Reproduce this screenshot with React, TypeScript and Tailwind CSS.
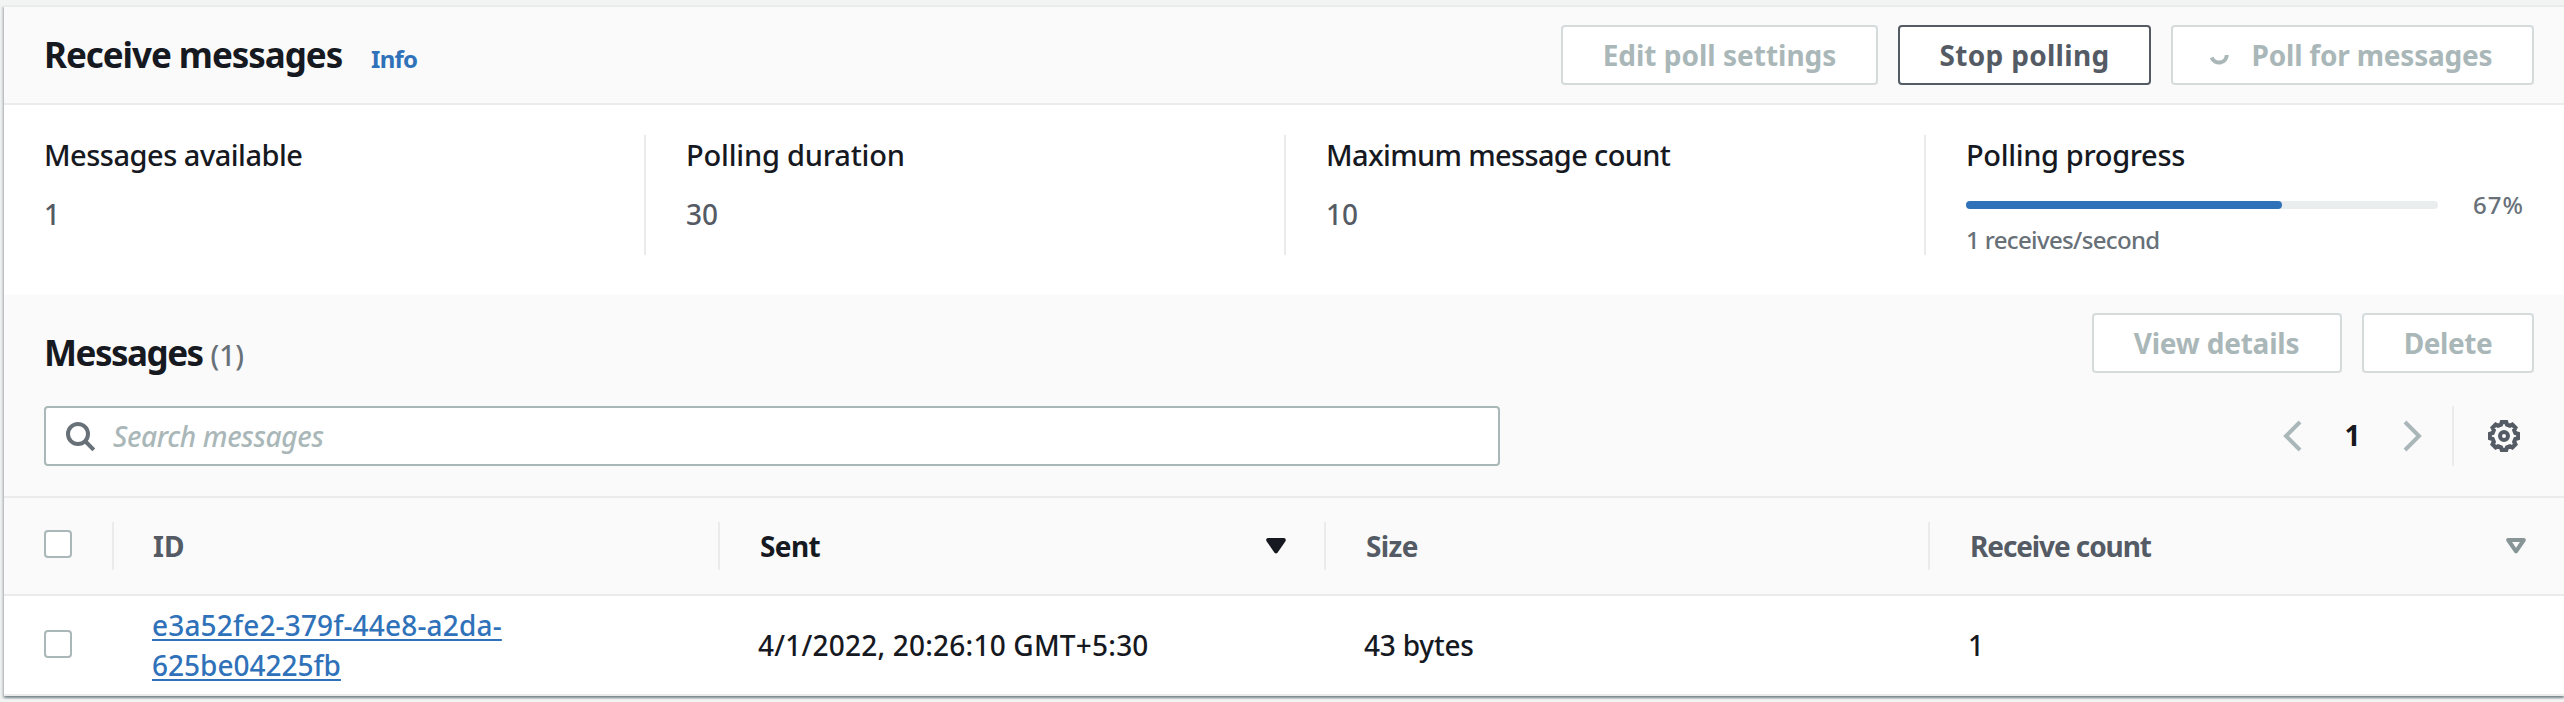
import React from "react";
import { clsx } from "clsx";

function Button({ className, children, active = false }: { className?: string; children: React.ReactNode; active?: boolean }) {
  return (
    <button
      className={clsx(
        "flex h-[60px] shrink-0 items-center justify-center rounded-[4px] border-2 bg-white text-[28px] leading-10 font-bold whitespace-nowrap",
        active ? "border-[#545b64] text-[#545b64]" : "border-[#d5dbdb] text-[#aab7b8]",
        className,
      )}
    >
      {children}
    </button>
  );
}

function Spinner() {
  return (
    <svg className="mr-[18px] h-[28px] w-[28px] shrink-0" viewBox="0 0 28 28" fill="none">
      <path d="M5.7 16.5 A7.8 7.8 0 0 0 20.8 14" stroke="#aab7b8" strokeWidth="4" />
    </svg>
  );
}

function SearchIcon() {
  return (
    <svg className="h-[32px] w-[32px] shrink-0" viewBox="0 0 32 32" fill="none" stroke="#687078" strokeWidth="4">
      <circle cx="14" cy="14" r="10" />
      <path d="M21 21 L29.8 29.8" />
    </svg>
  );
}

function gearPath() {
  const points: string[] = [];
  const at = (radius: number, degrees: number) => {
    const a = (degrees * Math.PI) / 180;
    points.push(`${(16 + radius * Math.sin(a)).toFixed(2)} ${(16 - radius * Math.cos(a)).toFixed(2)}`);
  };
  for (let i = 0; i < 8; i++) {
    at(14.1, i * 45 - 9);
    at(14.1, i * 45 + 9);
    at(11.8, i * 45 + 15);
    at(11.8, i * 45 + 30);
  }
  return `M${points.join("L")}Z`;
}

function GearIcon() {
  return (
    <svg className="h-[32px] w-[32px] shrink-0" viewBox="0 0 32 32" fill="none" stroke="#545b64" strokeWidth="4.2">
      <path d={gearPath()} />
      <circle cx="16" cy="16" r="4" strokeWidth="4" />
    </svg>
  );
}

function Chevron({ points }: { points: string }) {
  return (
    <svg className="h-[32px] w-[20px] shrink-0" viewBox="0 0 20 32" fill="none" stroke="#aab7b8" strokeWidth="4">
      <polyline points={points} />
    </svg>
  );
}

function SortIcon({ filled = false }: { filled?: boolean }) {
  const color = filled ? "#16191f" : "#879596";
  return (
    <svg className="h-[16px] w-[20px] shrink-0" viewBox="0 0 20 16" fill={filled ? color : "none"} stroke={color} strokeWidth="4" strokeLinejoin="round">
      <path d="M2.2 2 H17.8 L10 13.4 Z" />
    </svg>
  );
}

function Checkbox() {
  return <span className="block h-[28px] w-[28px] shrink-0 rounded-[4px] border-2 border-[#aab7b8] bg-white" />;
}

function Stat({ label, labelClass, first = false, children }: { label: string; labelClass: string; first?: boolean; children: React.ReactNode }) {
  return (
    <div className={clsx("h-[120px] border-l-2", first ? "border-transparent pl-[38px]" : "border-[#eaebeb] pl-10")}>
      <div className={clsx("text-[29px] leading-10 whitespace-nowrap", labelClass)}>{label}</div>
      {children}
    </div>
  );
}

const columns = "grid grid-cols-[108px_606px_606px_604px_636px]";

export default function App() {
  return (
    <div className="h-[702px] w-[2564px] overflow-hidden bg-[#f2f3f3] pt-[5px] pl-1 font-['Noto_Sans',sans-serif] text-[28px] font-medium text-[#16191f]">
      <main className="w-[2560px] border-y-2 border-[#eaebeb] bg-white shadow-[0_2px_2px_0_rgba(0,28,36,0.3),2px_2px_2px_0_rgba(0,28,36,0.15),-2px_2px_2px_0_rgba(0,28,36,0.15)]">
        <header className="flex h-[98px] items-center justify-between border-b-2 border-[#eaebeb] bg-[#fafafa] pr-[30px] pl-10">
          <div className="flex items-baseline">
            <h1 className="w-[327px] text-[35px] leading-[44px] font-bold tracking-[-1.05px] whitespace-nowrap">Receive messages</h1>
            <a className="text-[24px] font-bold tracking-[-0.7px] text-[#3072b9]">Info</a>
          </div>
          <div className="flex gap-5">
            <Button className="w-[317px]">Edit poll settings</Button>
            <Button active className="w-[253px] tracking-[0.3px]">Stop polling</Button>
            <Button className="w-[363px] pr-[7px] tracking-[-0.2px]">
              <Spinner />
              Poll for messages
            </Button>
          </div>
        </header>

        <section className="grid h-[190px] grid-cols-4 pt-[30px]">
          <Stat first label="Messages available" labelClass="tracking-[-0.5px]">
            <div className="mt-[19px] leading-10 text-[#545b64]">1</div>
          </Stat>
          <Stat label="Polling duration" labelClass="tracking-[-0.2px]">
            <div className="mt-[19px] leading-10 text-[#545b64]">30</div>
          </Stat>
          <Stat label="Maximum message count" labelClass="tracking-[-0.65px]">
            <div className="mt-[19px] leading-10 text-[#545b64]">10</div>
          </Stat>
          <Stat label="Polling progress" labelClass="tracking-[-0.35px]">
            <div className="mt-3 text-[24px] leading-9 text-[#687078]">
              <div className="flex h-[35px] items-center">
                <div className="h-2 w-[472px] rounded-full bg-[#eaeded]">
                  <div className="h-2 w-[67%] rounded-full bg-[#3072b9]" />
                </div>
                <span className="ml-[35px] tracking-[1px]">67%</span>
              </div>
              <div className="tracking-[-0.65px]">1 receives/second</div>
            </div>
          </Stat>
        </section>

        <section className="h-[203px] border-b-2 border-[#eaebeb] bg-[#fafafa] pt-[18px] pr-[30px] pl-10">
          <div className="flex h-[60px] items-start justify-between">
            <h2 className="flex items-baseline pt-[18px] text-[35px] leading-[44px] font-bold tracking-[-1.5px]">
              Messages
              <span className="ml-[8px] text-[28px] font-medium tracking-normal text-[#687078]">(1)</span>
            </h2>
            <div className="flex gap-5">
              <Button className="w-[250px] pr-px tracking-[-0.2px]">View details</Button>
              <Button className="w-[172px] tracking-[-0.4px]">Delete</Button>
            </div>
          </div>
          <div className="mt-[33px] flex items-center justify-between">
            <div className="flex h-[60px] w-[1456px] items-center rounded-[4px] border-2 border-[#aab7b8] bg-white pl-[18px]">
              <SearchIcon />
              <span className="ml-[17px] text-[28px] leading-10 tracking-[-0.35px] text-[#aab7b8] italic">Search messages</span>
            </div>
            <div className="flex h-[60px] items-center">
              <Chevron points="18,2 4,16 18,30" />
              <span className="mx-[42px] w-[17px] pb-0.5 text-center leading-10 font-bold">1</span>
              <Chevron points="2,2 16,16 2,30" />
              <span className="ml-[29px] h-[60px] w-0.5 bg-[#eaebeb]" />
              <span className="mr-[14px] ml-[34px]">
                <GearIcon />
              </span>
            </div>
          </div>
        </section>

        <div className={clsx(columns, "h-[98px] items-center border-b-2 border-[#eaebeb] bg-[#fafafa] leading-10 font-bold text-[#545b64]")}>
          <div className="pb-1 pl-10">
            <Checkbox />
          </div>
          <div className="flex h-[48px] items-center border-l-2 border-[#eaebeb] pl-[39px]">ID</div>
          <div className="flex h-[48px] items-center justify-between border-l-2 border-[#eaebeb] pr-[38px] pl-10 tracking-[-0.6px] text-[#16191f]">
            <span>Sent</span>
            <SortIcon filled />
          </div>
          <div className="flex h-[48px] items-center border-l-2 border-[#eaebeb] pl-10 tracking-[-0.6px]">Size</div>
          <div className="flex h-[48px] items-center justify-between border-l-2 border-[#eaebeb] pr-[38px] pl-10 tracking-[-1.1px]">
            <span>Receive count</span>
            <SortIcon />
          </div>
        </div>

        <div className={clsx(columns, "h-[98px] items-center leading-10 whitespace-nowrap")}>
          <div className="pb-0.5 pl-10">
            <Checkbox />
          </div>
          <a className="pl-10 tracking-[0.17px] text-[#3072b9] underline decoration-2 underline-offset-[3px]">
            e3a52fe2-379f-44e8-a2da-
            <br />
            <span className="tracking-[0px]">625be04225fb</span>
          </a>
          <div className="pl-10 tracking-[0.22px]">4/1/2022, 20:26:10 GMT+5:30</div>
          <div className="pl-10 tracking-[-0.2px]">43 bytes</div>
          <div className="pl-10">1</div>
        </div>
      </main>
    </div>
  );
}
